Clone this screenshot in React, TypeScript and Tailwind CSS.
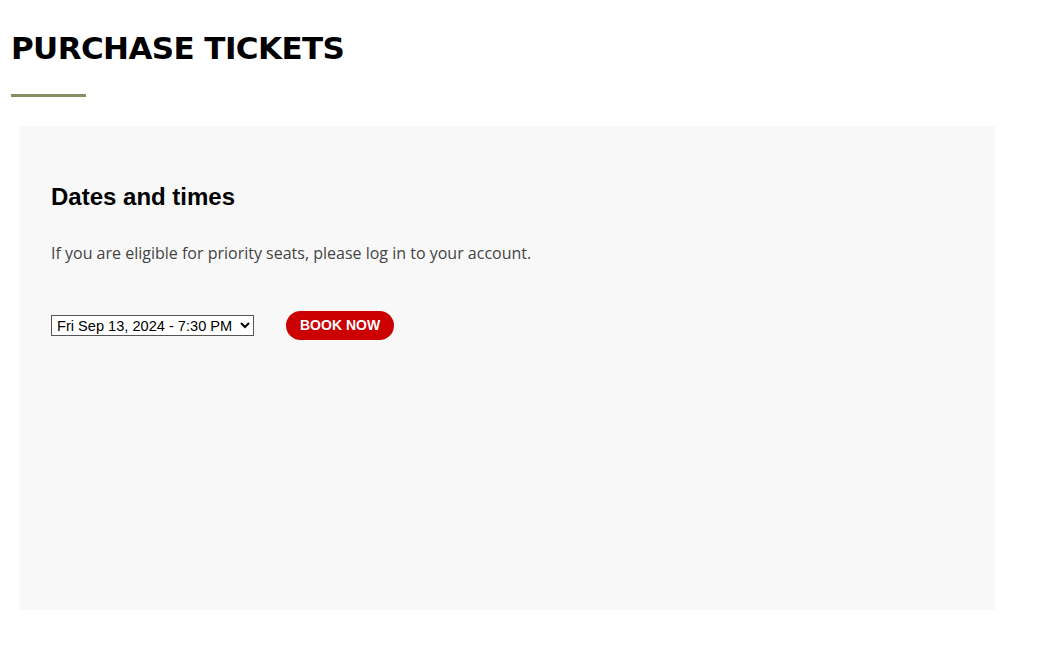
export default function App() {
  return (
    <div className="min-h-screen bg-white px-[11px] pt-[30px]">
      <h1 className="text-[31px] leading-[36px] font-bold tracking-[-0.6px] text-black font-['DejaVu_Sans',sans-serif]">
        PURCHASE TICKETS
      </h1>
      <div className="mt-[28px] h-[3px] w-[75px] bg-[#8a8c64]" />
      <div className="ml-[8px] mt-[29px] h-[484px] w-[976px] bg-[#f8f8f8] px-[32px] pt-[57px]">
        <h2 className="text-[24px] leading-[28px] font-bold text-black font-['Liberation_Sans',Arial,sans-serif]">
          Dates and times
        </h2>
        <p className="mt-[30px] text-[16px] leading-[24px] text-[#444] font-['Open_Sans',sans-serif]">
          If you are eligible for priority seats, please log in to your account.
        </p>
        <div className="mt-[46px] flex items-center gap-[32px]">
          <select
            defaultValue="a"
            className="h-[21px] w-[203px] border border-[#555] bg-white pl-[1px] text-[14.6px] text-black font-['Liberation_Sans',Arial,sans-serif]"
          >
            <option value="a">Fri Sep 13, 2024 - 7:30 PM</option>
          </select>
          <button className="h-[29px] rounded-full bg-[#cc0000] px-[14px] text-[14px] font-bold text-white font-['Liberation_Sans',Arial,sans-serif]">
            BOOK NOW
          </button>
        </div>
      </div>
    </div>
  );
}
